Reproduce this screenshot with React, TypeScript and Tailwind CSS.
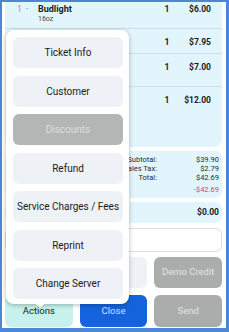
import React from "react";

const menuItems = [
  { label: "Ticket Info", disabled: false },
  { label: "Customer", disabled: false },
  { label: "Discounts", disabled: true },
  { label: "Refund", disabled: false },
  { label: "Service Charges / Fees", disabled: false },
  { label: "Reprint", disabled: false },
  { label: "Change Server", disabled: false },
];

function Row({
  h,
  pt,
  seat,
  name,
  mod,
  qty,
  price,
  last,
}: {
  h: string;
  pt: string;
  seat?: string;
  name?: string;
  mod?: string;
  qty: string;
  price: string;
  last?: boolean;
}) {
  return (
    <div className={`${h} ${pt} flex items-start ${last ? "" : "border-b border-[#c9e0ea]"}`}>
      <div className="w-[21px] pl-[12px] text-[9px] leading-[10px] text-[#e8893c]">{seat}</div>
      <div className="w-[12px] text-[8px] leading-[10px] text-[#7a8a90]">{seat ? "-" : ""}</div>
      <div className="flex-1 flex flex-col">
        <div className="text-[9px] leading-[10px] font-bold text-[#1a1a1a]">{name}</div>
        {mod && <div className="text-[7px] leading-[9px] text-[#444] mt-[0.5px]">{mod}</div>}
      </div>
      <div className="w-[20px] text-center text-[8.5px] leading-[10px] font-bold text-[#1a1a1a]">{qty}</div>
      <div className="w-[45px] pr-[11px] text-right text-[8.5px] leading-[10px] font-bold text-[#1a1a1a]">{price}</div>
    </div>
  );
}

export default function App() {
  return (
    <div
      className="relative w-[229px] h-[332px] overflow-hidden bg-white border-l-2 border-t-2 border-r-[3px] border-b-[4px] border-[#4a88d6] flex flex-col pl-[3px] pr-[4px] pb-[1px]"
      style={{ fontFamily: "Roboto, 'Noto Sans', sans-serif" }}
    >
      {/* Items panel */}
      <div className="h-[145px] shrink-0 bg-[#e2f5fd] rounded-b-[8px] flex flex-col">
        <Row h="h-[27px]" pt="pt-[2px]" seat="1" name="Budlight" mod="16oz" qty="1" price="$6.00" />
        <Row h="h-[25px]" pt="pt-[8px]" qty="1" price="$7.95" />
        <Row h="h-[33px]" pt="pt-[8px]" qty="1" price="$7.00" />
        <Row h="flex-1" pt="pt-[8px]" qty="1" price="$12.00" last />
      </div>

      {/* Totals */}
      <div className="mt-[4px] h-[47px] shrink-0 bg-[#e2f5fd] rounded-[7px] pt-[3.5px] pr-[3px] flex flex-col text-[7.5px] leading-[9px] text-[#2a2a2a]">
        <div className="flex">
          <div className="flex-1 text-right">Subtotal:</div>
          <div className="w-[62px] text-right">$39.90</div>
        </div>
        <div className="flex">
          <div className="flex-1 text-right">Sales Tax:</div>
          <div className="w-[62px] text-right">$2.79</div>
        </div>
        <div className="flex">
          <div className="flex-1 text-right">Total:</div>
          <div className="w-[62px] text-right">$42.69</div>
        </div>
        <div className="flex mt-[3px]">
          <div className="flex-1" />
          <div className="w-[62px] text-right text-[#e23a6a]">-$42.69</div>
        </div>
      </div>

      {/* Balance */}
      <div className="mt-[4px] h-[21px] shrink-0 bg-[#e2f5fd] rounded-[7px] pr-[3px] flex items-center justify-end">
        <span className="text-[8.5px] font-bold text-[#1a1a1a]">$0.00</span>
      </div>

      {/* Input */}
      <div className="mt-[5px] h-[24px] shrink-0 bg-white border border-[#dedede] rounded-[6px]" />

      {/* Payment buttons */}
      <div className="mt-[5px] h-[31px] shrink-0 grid grid-cols-3 gap-[7px]">
        <div className="bg-[#eef2f7] rounded-[6px] flex items-center justify-center text-[9.5px] text-[#333]">Cash</div>
        <div className="bg-[#eef2f7] rounded-[6px] flex items-center justify-center text-[9.5px] text-[#333]">Card</div>
        <div className="bg-[#abadad] rounded-[6px] flex items-center justify-center text-[9.5px] text-[#e2e4e4]">Demo Credit</div>
      </div>

      {/* Bottom buttons */}
      <div className="mt-[7px] h-[32px] shrink-0 grid grid-cols-3 gap-[7px]">
        <div className="bg-[#c6f1ec] rounded-[6px] flex items-center justify-center text-[9.5px] text-[#1a1a1a]">Actions</div>
        <div className="bg-[#1463dc] rounded-[6px] flex items-center justify-center text-[9.5px] text-[#d0def5]">Close</div>
        <div className="bg-[#abadad] rounded-[6px] flex items-center justify-center text-[9.5px] text-[#e2e4e4]">Send</div>
      </div>

      {/* Actions popup */}
      <div className="absolute left-[4px] top-[28px] w-[123px] h-[274px] bg-white rounded-[8px] shadow-[0_1px_5px_rgba(0,0,0,0.28)] pt-[7px] pl-[7px] pr-[6px] flex flex-col gap-[7.5px]">
        {menuItems.map((m) => (
          <div
            key={m.label}
            className={`h-[31px] shrink-0 rounded-[6px] flex items-center justify-center text-[10px] whitespace-nowrap ${
              m.disabled ? "bg-[#b4b6b6] text-[#dcdede]" : "bg-[#eef2f7] text-[#1a1a1a]"
            }`}
          >
            {m.label}
          </div>
        ))}
        <div className="absolute left-[31px] bottom-[-3px] w-[6px] h-[6px] bg-white rotate-45 shadow-[1px_1px_1px_rgba(0,0,0,0.12)]" />
      </div>
    </div>
  );
}
